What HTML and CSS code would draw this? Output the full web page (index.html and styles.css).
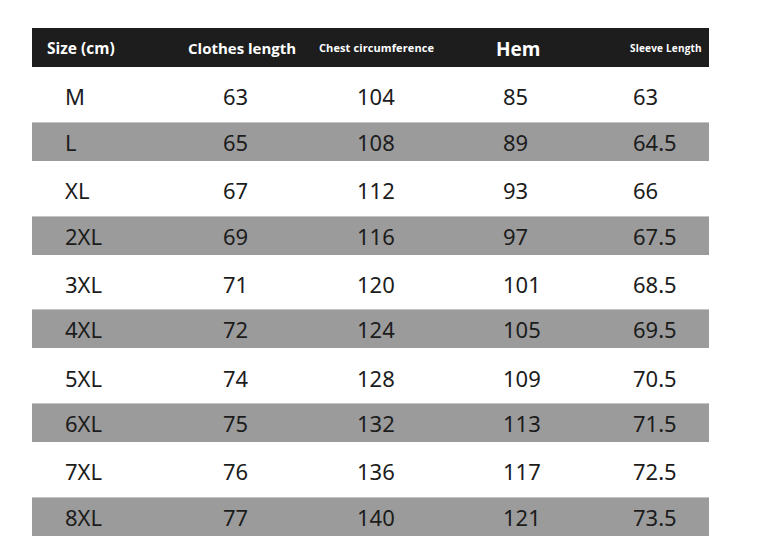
FILE: index.html
```html
<!DOCTYPE html>
<html>
<head>
<meta charset="utf-8">
<link rel="stylesheet" href="styles.css">
</head>
<body>
<div class="table">
  <div class="head">
    <span class="h h-size">Size (cm)</span>
    <span class="h h-len">Clothes length</span>
    <span class="h h-chest">Chest circumference</span>
    <span class="h h-hem">Hem</span>
    <span class="h h-sleeve">Sleeve Length</span>
  </div>
  <div class="row"><span>M</span><span>63</span><span>104</span><span>85</span><span>63</span></div>
  <div class="row alt"><span>L</span><span>65</span><span>108</span><span>89</span><span>64.5</span></div>
  <div class="row"><span>XL</span><span>67</span><span>112</span><span>93</span><span>66</span></div>
  <div class="row alt"><span>2XL</span><span>69</span><span>116</span><span>97</span><span>67.5</span></div>
  <div class="row"><span>3XL</span><span>71</span><span>120</span><span>101</span><span>68.5</span></div>
  <div class="row alt"><span>4XL</span><span>72</span><span>124</span><span>105</span><span>69.5</span></div>
  <div class="row"><span>5XL</span><span>74</span><span>128</span><span>109</span><span>70.5</span></div>
  <div class="row alt"><span>6XL</span><span>75</span><span>132</span><span>113</span><span>71.5</span></div>
  <div class="row"><span>7XL</span><span>76</span><span>136</span><span>117</span><span>72.5</span></div>
  <div class="row alt"><span>8XL</span><span>77</span><span>140</span><span>121</span><span>73.5</span></div>
</div>
</body>
</html>
```
FILE: styles.css
```css
html, body {
  margin: 0;
  padding: 0;
  background: #ffffff;
}
body {
  font-family: "Noto Sans", "Open Sans", sans-serif;
  color: #1c1c1c;
}
.table {
  margin: 28px 0 0 32px;
  width: 677px;
  display: flex;
  flex-direction: column;
}
.head {
  height: 39px;
  background: #1d1d1d;
  display: grid;
  grid-template-columns: 141px 131px 177px 134px auto;
  align-items: center;
  padding-left: 15px;
  color: #ffffff;
  font-weight: 700;
  font-family: "Open Sans", "Noto Sans", sans-serif;
}
.h-size { font-size: 15.5px; }
.h-len { font-size: 15px; }
.h-chest { font-size: 11px; letter-spacing: 0.1px; }
.h-hem { font-size: 19px; padding-top: 3px; }
.h-sleeve { font-size: 10px; letter-spacing: 0.2px; }
.row {
  height: 54.75px;
  display: grid;
  grid-template-columns: 158px 134px 146px 130px auto;
  align-items: center;
  padding-left: 33px;
  font-size: 22px;
}
.row span { padding-top: 4px; }
.row.alt {
  height: 39px;
  background: #9b9b9b;
  box-shadow: inset 0 1px 0 #c4c4c4;
}
.row.alt span { padding-top: 1px; }
```
